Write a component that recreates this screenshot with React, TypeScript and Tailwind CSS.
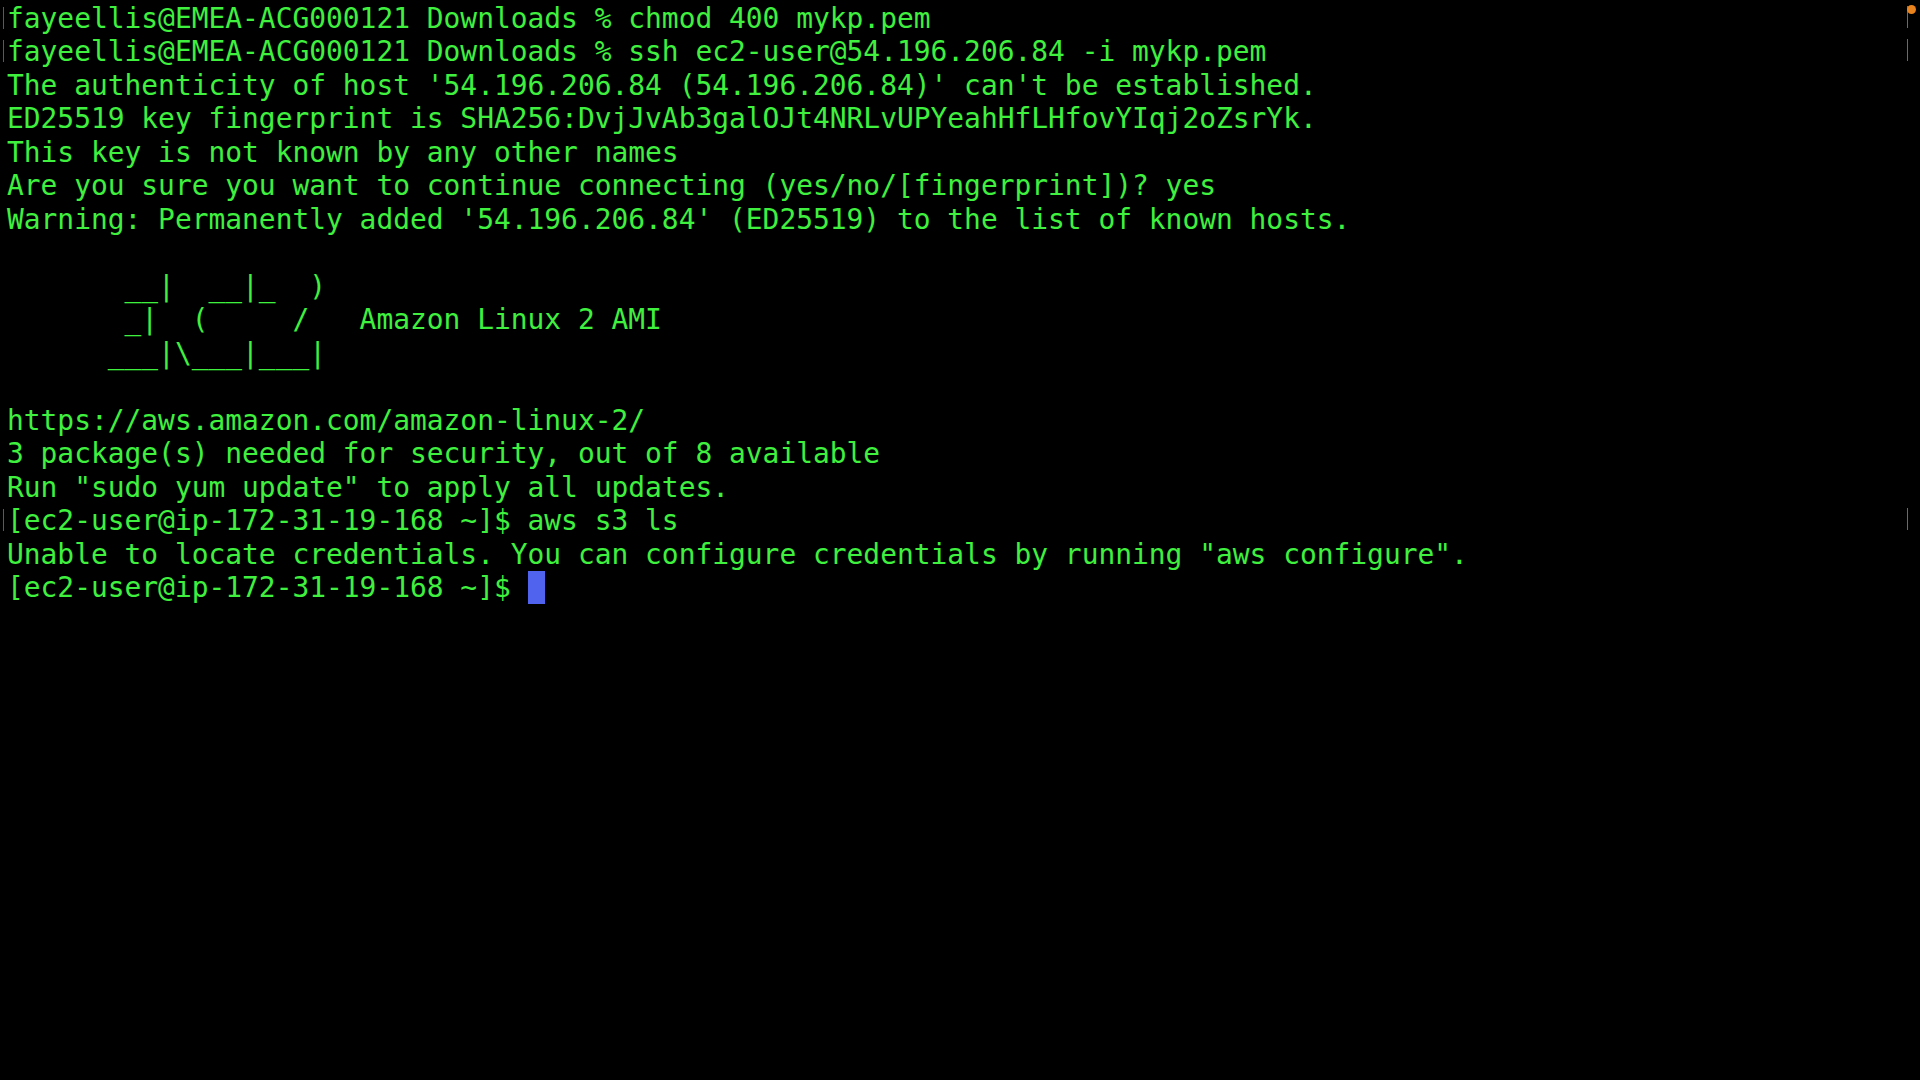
import React from "react";

const lines: string[] = [
  "fayeellis@EMEA-ACG000121 Downloads % chmod 400 mykp.pem",
  "fayeellis@EMEA-ACG000121 Downloads % ssh ec2-user@54.196.206.84 -i mykp.pem",
  "The authenticity of host '54.196.206.84 (54.196.206.84)' can't be established.",
  "ED25519 key fingerprint is SHA256:DvjJvAb3galOJt4NRLvUPYeahHfLHfovYIqj2oZsrYk.",
  "This key is not known by any other names",
  "Are you sure you want to continue connecting (yes/no/[fingerprint])? yes",
  "Warning: Permanently added '54.196.206.84' (ED25519) to the list of known hosts.",
  "",
  "       __|  __|_  )",
  "       _|  (     /   Amazon Linux 2 AMI",
  "      ___|\\___|___|",
  "",
  "https://aws.amazon.com/amazon-linux-2/",
  "3 package(s) needed for security, out of 8 available",
  "Run \"sudo yum update\" to apply all updates.",
  "[ec2-user@ip-172-31-19-168 ~]$ aws s3 ls",
  "Unable to locate credentials. You can configure credentials by running \"aws configure\".",
];

const marked = new Set([0, 1, 15]);

export default function App() {
  return (
    <div className="relative w-[1920px] h-[1080px] bg-black overflow-hidden">
      <div
        className="pl-[7px] pt-[1.5px] text-[27.9px] leading-[33.5px] text-[#3ff03f] whitespace-pre"
        style={{ fontFamily: '"DejaVu Sans Mono", "Liberation Mono", monospace' }}
      >
        {lines.map((l, i) => (
          <div key={i} className="relative h-[33.5px]">
            {marked.has(i) && (
              <>
                <span className="absolute left-[-4px] top-[5px] w-[1px] h-[22px] bg-[#5a5a5a]" />
                <span className="absolute left-[1900px] top-[4px] w-[1px] h-[22px] bg-[#6a6a6a]" />
              </>
            )}
            {l}
          </div>
        ))}
        <div className="relative h-[33.5px] flex items-center">
          <span>{"[ec2-user@ip-172-31-19-168 ~]$ "}</span>
          <span className="inline-block w-[17px] h-[33px] bg-[#4f63ee]" />
        </div>
      </div>
      <span className="absolute left-[1907px] top-[5px] w-[9px] h-[9px] rounded-full bg-[#e8831e]" />
    </div>
  );
}
